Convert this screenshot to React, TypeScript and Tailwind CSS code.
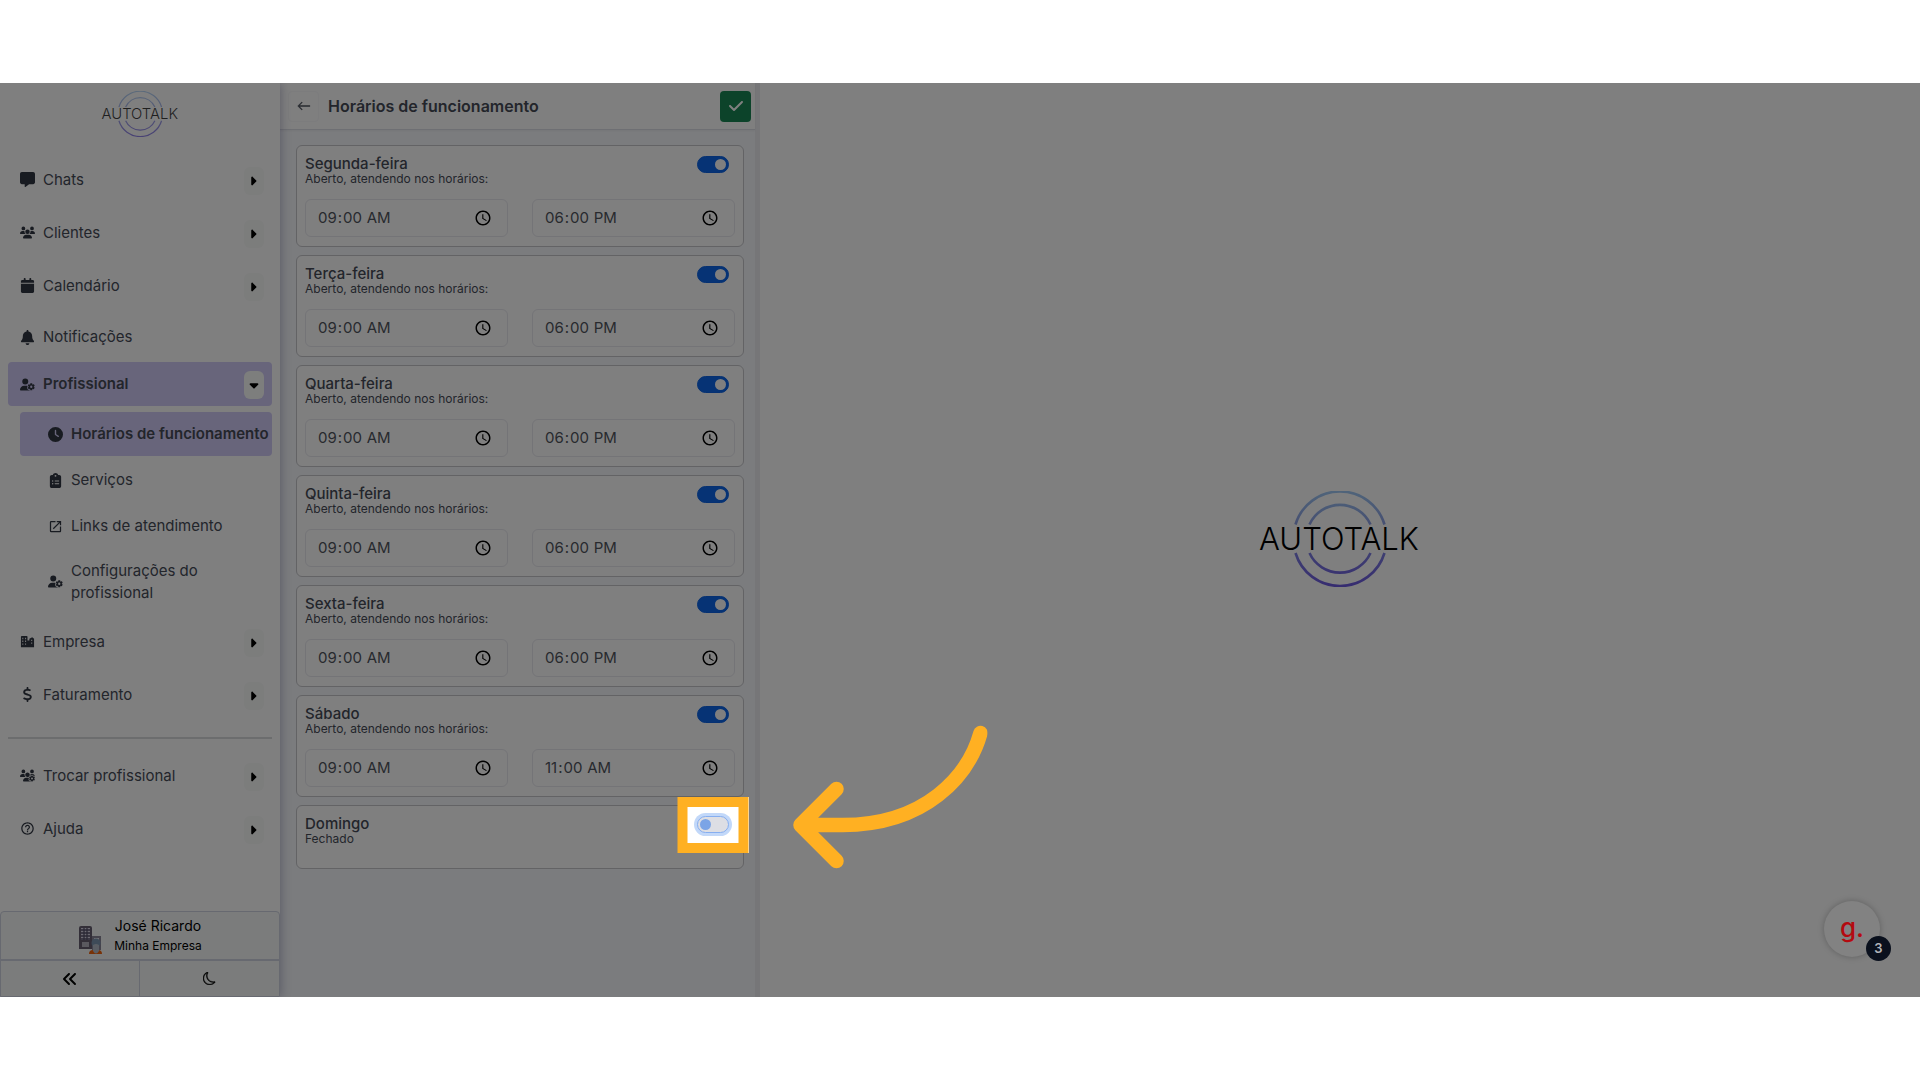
import { useState } from "react";
import type { ReactNode } from "react";
import { twMerge } from "tailwind-merge";
import {
  FaAnglesLeft,
  FaBell,
  FaCalendar,
  FaCaretDown,
  FaCaretRight,
  FaCheck,
  FaClipboardList,
  FaClock,
  FaDollarSign,
  FaMessage,
  FaUserGear,
  FaUsers,
  FaUsersGear,
} from "react-icons/fa6";
import { BsArrowLeft, BsMoon } from "react-icons/bs";
import { MdHelpOutline, MdOpenInNew } from "react-icons/md";

interface Day {
  name: string;
  open: boolean;
  from?: string;
  to?: string;
}

const week: Day[] = [
  { name: "Segunda-feira", open: true, from: "09:00", to: "18:00" },
  { name: "Terça-feira", open: true, from: "09:00", to: "18:00" },
  { name: "Quarta-feira", open: true, from: "09:00", to: "18:00" },
  { name: "Quinta-feira", open: true, from: "09:00", to: "18:00" },
  { name: "Sexta-feira", open: true, from: "09:00", to: "18:00" },
  { name: "Sábado", open: true, from: "09:00", to: "11:00" },
  { name: "Domingo", open: false },
];

const Logo = ({ id, className }: { id: string; className?: string }) => (
  <svg viewBox="0 0 168 96" className={className} role="img" aria-label="AUTOTALK">
    <defs>
      <linearGradient id={id} gradientUnits="userSpaceOnUse" x1="0" y1="0" x2="0" y2="96">
        <stop offset="0" stopColor="#9fc8f4" />
        <stop offset="0.35" stopColor="#8c9fe4" />
        <stop offset="1" stopColor="#6c58e0" />
      </linearGradient>
    </defs>
    <g fill="none" stroke={`url(#${id})`} strokeWidth="2.6">
      <path d="M39.5 33.5A46.5 46.5 0 0 1 128.500 33.5" />
      <path d="M53.5 33.5A33.5 33.5 0 0 1 114.500 33.5" />
      <path d="M39.5 62A46.5 46.5 0 0 0 128.500 62" />
      <path d="M53.5 62A33.5 33.5 0 0 0 114.500 62" />
    </g>
    <text x="83" y="59" textAnchor="middle" fontSize="31" fontWeight="300" fontFamily="Inter, sans-serif" fill="#000">
      AUTOTALK
    </text>
  </svg>
);

const BuildingIcon = () => (
  <svg viewBox="0 0 16 16" fill="currentColor" fillRule="evenodd">
    <path d="M1 3a1 1 0 0 1 1-1h5a1 1 0 0 1 1 1v4h2V5l3-1.500 2 1.500v9H1zM2.500 4v1.500h1V4zm3 0v1.500h1V4zm-3 3v1.500h1V7zm3 0v1.500h1V7zm-3 3v1.500h1V10zm3 0v1.500h1V10zM12 6v1.500h1V6zm0 3v1.500h1V9z" />
  </svg>
);

const CompanyAvatar = () => (
  <svg viewBox="0 0 24 30" className="mt-2 h-[30px] w-6" aria-hidden="true">
    <path d="M1 3q0-2 2-2h9q2 0 2 2v21H1z" fill="#665f70" />
    <path d="M3 3h9v12H3z" fill="#d8d5e4" />
    <path d="M3 5h9M3 8h9M3 11h9M3 14h9M6 3v12M9 3v12" stroke="#56506a" strokeWidth="1.300" />
    <path d="M4 17h7v5H4z" fill="#b5b2be" />
    <path d="M14 11h9v14h-9z" fill="#8b8799" />
    <path d="M16 13h5v2h-5z" fill="#e7e5ee" />
    <path d="M11 29q0-4 4-4h5q4 0 4 4z" fill="#f0640f" />
    <circle cx="18" cy="18" r="4.500" fill="#7c97b0" />
    <path d="M15 20q3-2 6 0v6q-3 5-6 0z" fill="#b5bdc8" />
  </svg>
);

interface NavItemProps {
  icon: ReactNode;
  label: string;
  className?: string;
  arrow?: "right" | "down";
  active?: boolean;
  sub?: boolean;
}

const NavItem = ({ icon, label, className, arrow, active, sub }: NavItemProps) => (
  <div
    className={twMerge(
      "mx-2 flex h-[53px] items-center rounded pl-3 pr-2",
      sub && "ml-5 h-11 pl-7",
      active && "bg-[#d0caf6] font-semibold",
      className
    )}
  >
    <a href="#" className="flex min-w-0 flex-1 items-center">
      <span className="flex w-[15px] shrink-0 justify-center text-[#303642] [&>svg]:size-[15px]">{icon}</span>
      <span className="ml-2 flex-1 leading-[22px]">{label}</span>
    </a>
    {arrow && (
      <button
        type="button"
        aria-label={`Abrir ${label}`}
        className={twMerge(
          "mt-0.5 flex h-7 w-5 items-center justify-center rounded-md bg-[#f8faf9] text-black",
          active && "bg-[#fafcfa]"
        )}
      >
        {arrow === "right" ? <FaCaretRight size={14} className="mr-0.5" /> : <FaCaretDown size={14} />}
      </button>
    )}
  </div>
);

const Sidebar = () => (
  <aside className="relative z-10 flex w-[280px] shrink-0 flex-col bg-white shadow-[0_0_10px_rgba(80,80,130,0.45)]">
    <div className="flex h-[70px] justify-center pt-2">
      <Logo id="logo-small" className="h-[46px] opacity-75" />
    </div>
    <nav className="flex flex-col">
      <NavItem icon={<FaMessage />} label="Chats" arrow="right" />
      <NavItem icon={<FaUsers />} label="Clientes" arrow="right" />
      <NavItem icon={<FaCalendar />} label="Calendário" arrow="right" />
      <NavItem icon={<FaBell />} label="Notificações" className="h-[50px]" />
      <NavItem icon={<FaUserGear />} label="Profissional" arrow="down" active className="h-11" />
      <NavItem icon={<FaClock />} label="Horários de funcionamento" sub active className="mt-1.5 pr-0" />
      <NavItem icon={<FaClipboardList />} label="Serviços" sub className="h-12" />
      <NavItem icon={<MdOpenInNew />} label="Links de atendimento" sub />
      <NavItem icon={<FaUserGear />} label="Configurações do profissional" sub className="h-[67px] pr-12" />
      <NavItem icon={<BuildingIcon />} label="Empresa" arrow="right" />
      <NavItem icon={<FaDollarSign />} label="Faturamento" arrow="right" />
      <hr className="mx-2 mb-2.5 mt-4 border-t-2 border-[#d9dadd]" />
      <NavItem icon={<FaUsersGear />} label="Trocar profissional" arrow="right" />
      <NavItem icon={<MdHelpOutline />} label="Ajuda" arrow="right" />
    </nav>
    <div className="mt-auto rounded-t border border-[#ced2e0] bg-[#f6f9f8] text-black">
      <button type="button" className="flex h-[49px] w-full items-center justify-center gap-3 border-b-2 border-[#ced2e0]">
        <CompanyAvatar />
        <span className="flex flex-col items-center">
          <span className="text-sm leading-5">José Ricardo</span>
          <span className="text-xs leading-5">Minha Empresa</span>
        </span>
      </button>
      <div className="grid h-[35px] grid-cols-2 divide-x divide-[#ced2e0]">
        <button type="button" aria-label="Recolher menu" className="flex items-center justify-center">
          <FaAnglesLeft size={16} />
        </button>
        <button type="button" aria-label="Modo escuro" className="flex items-center justify-center">
          <BsMoon size={13} strokeWidth={0.5} />
        </button>
      </div>
    </div>
  </aside>
);

// Dims everything around the switch and points at it
const Spotlight = () => (
  <div className="pointer-events-none absolute left-1/2 top-1/2 z-40 h-14 w-[71px] -translate-x-1/2 -translate-y-1/2 border-10 border-[#ffb022] shadow-[0_0_0_2000px_rgba(0,0,0,0.5)]">
    <svg viewBox="0 0 196 160" className="absolute left-[104px] top-[-92px] h-40 w-[196px] max-w-none" aria-hidden="true">
      <path
        d="M189 18C177 61 134 110 51 110Q30 110 10 110M45 74L9 110L45 146"
        fill="none"
        stroke="#ffb022"
        strokeWidth="14.500"
        strokeLinecap="round"
        strokeLinejoin="round"
      />
    </svg>
  </div>
);

const DayCard = ({ day }: { day: Day }) => {
  const [open, setOpen] = useState(day.open);

  return (
    <section className={twMerge("rounded-md border border-[#c6c7cb] bg-white px-2 pt-2 pb-[9px]", !day.open && "pb-[22px]")}>
      <div className="flex justify-between">
        <label htmlFor={day.name} className="pt-0.5">
          <span className="block font-medium leading-4">{day.name}</span>
          <span className="block text-xs leading-[14px]">{open ? "Aberto, atendendo nos horários:" : "Fechado"}</span>
        </label>
        <span className="relative mr-1.5 mt-0.5 h-[17px] w-8">
          <input
            id={day.name}
            type="checkbox"
            role="switch"
            checked={open}
            onChange={() => setOpen(!open)}
            className={twMerge(
              "block h-[17px] w-8 appearance-none rounded-full border border-[#0c63e4] bg-[#dddee4] outline-none",
              "before:mt-0.5 before:ml-0.5 before:block before:size-[11px] before:rounded-full before:bg-[#7ba4e6] before:content-['']",
              "checked:bg-[#0c66ea] checked:before:ml-[17px] checked:before:bg-white",
              !day.open && "border-[#86aef0] ring-[3px] ring-[#c2d8f9]"
            )}
          />
          {!day.open && <Spotlight />}
        </span>
      </div>
      {open && (
        <div className="mt-[13px] grid grid-cols-2 gap-6">
          {[day.from, day.to].map((value, i) => (
            <input
              key={i}
              type="time"
              aria-label={i === 0 ? `${day.name}, abertura` : `${day.name}, fechamento`}
              defaultValue={value}
              className="h-[38px] w-full rounded-md border border-[#e8e8ef] bg-white px-[11px] text-[15px] text-[#50545d] [&::-webkit-calendar-picker-indicator]:size-4.5 [&::-webkit-calendar-picker-indicator]:p-0 [&::-webkit-calendar-picker-indicator]:mr-1"
            />
          ))}
        </div>
      )}
    </section>
  );
};

const App = () => (
  <div className="flex h-screen min-h-[1000px] flex-col bg-white py-[83px] font-['Inter',sans-serif] text-[15px] text-[#464b57]">
    <div className="relative flex min-h-0 flex-1 overflow-hidden">
      <Sidebar />
      <main className="flex w-[480px] shrink-0 flex-col border-r-[5px] border-[#ececf1] bg-[#f6f8fc]">
        <header className="flex h-[47px] shrink-0 items-center border-b border-[#dddfe6] bg-white pl-2 pr-1 shadow-xs">
          <button type="button" aria-label="Voltar" className="flex size-[31px] items-center justify-center rounded border border-[#f8f8fa]">
            <BsArrowLeft size={14} strokeWidth={0.5} />
          </button>
          <h1 className="ml-[9px] flex-1 text-base font-semibold">Horários de funcionamento</h1>
          <button type="button" aria-label="Salvar" className="flex size-[31px] items-center justify-center rounded-sm bg-[#198754] text-white">
            <FaCheck size={16} />
          </button>
        </header>
        <div className="flex flex-col gap-2 pl-4 pr-[11px] pt-[15px]">
          {week.map((day) => (
            <DayCard key={day.name} day={day} />
          ))}
        </div>
      </main>
      <div className="flex min-w-0 flex-1 items-center justify-center bg-white pb-0.5">
        <Logo id="logo-large" className="h-24" />
      </div>
      {/* Guide widget, stays above the dimmed page */}
      <button
        type="button"
        className="absolute bottom-10 right-10 z-50 flex size-14 items-center justify-center rounded-full bg-[#828282] text-[26px] font-medium text-[#b40a10] shadow-[0_0_6px_rgba(0,0,0,0.25)]"
      >
        <span className="-mt-1">g.</span>
        <span className="absolute -bottom-1 -right-[11px] flex size-[25px] items-center justify-center rounded-full bg-[#0a101d] text-[13px] font-semibold text-[#b4b6ba]">
          3
        </span>
      </button>
    </div>
  </div>
);

export default App;
